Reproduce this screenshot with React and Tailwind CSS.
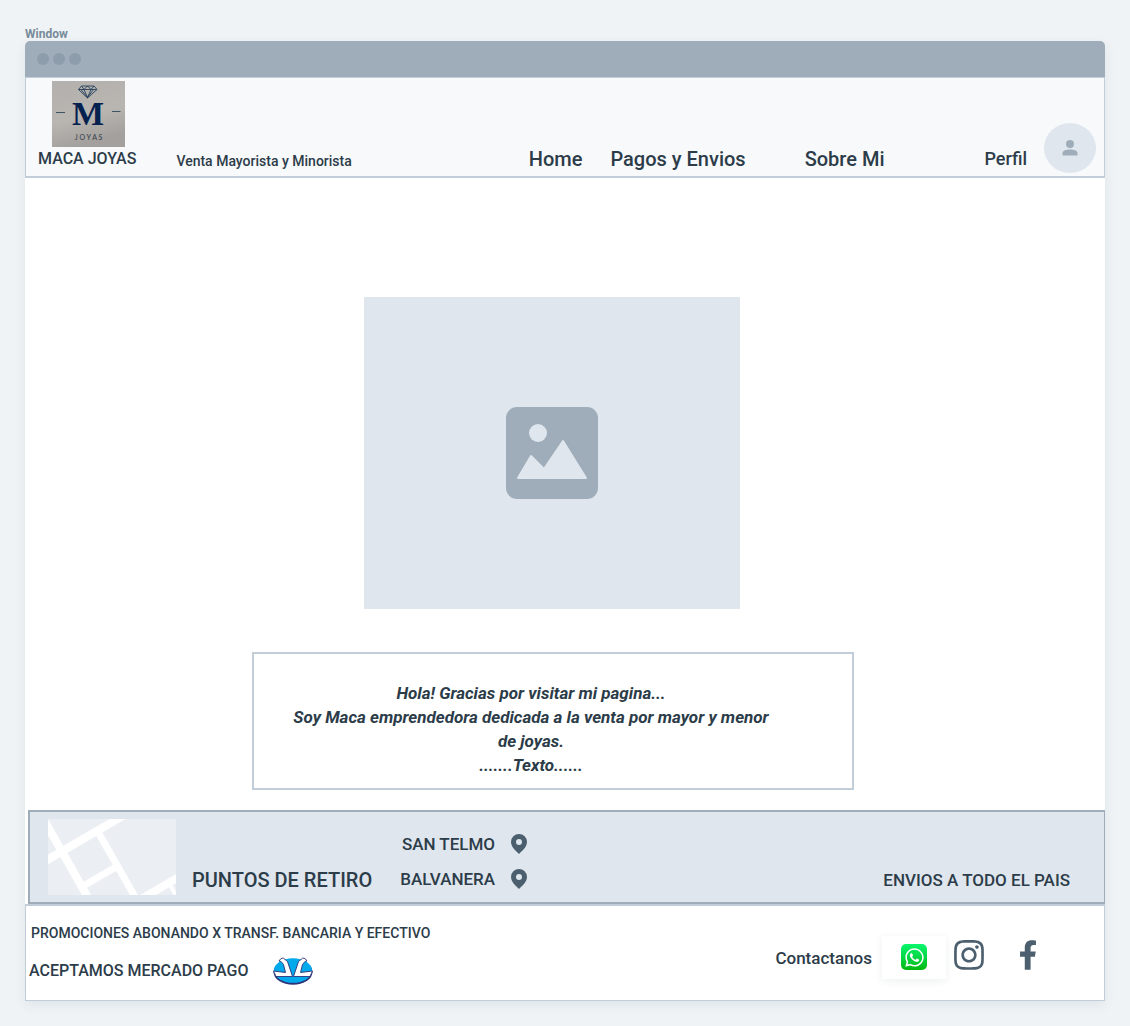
import React from "react";
import { FaInstagram, FaWhatsapp } from "react-icons/fa";

function BrandLogo() {
  return (
    <svg viewBox="0 0 73 66" className="h-[66px] w-[73px]" role="img" aria-label="Maca Joyas">
      <defs>
        <linearGradient id="paper" x1="0" y1="0" x2="0.3" y2="1">
          <stop offset="0" stopColor="#b3b0ad" />
          <stop offset="0.6" stopColor="#b9b5b1" />
          <stop offset="1" stopColor="#a3a09d" />
        </linearGradient>
      </defs>
      <rect width="73" height="66" fill="url(#paper)" />
      <g fill="none" stroke="#24405a" strokeWidth="0.9">
        <path d="M29.500 5h12.500l3 3.500-9.500 8.500-9-8.500z" />
        <path d="M26.500 8.500h18M29.500 5l2.500 3.500 3.500-3.500 3.500 3.500 3-3.500M32 8.500l3.500 8 3.500-8M29 8.500l6.500 8 6-8" />
      </g>
      <text x="36" y="44" textAnchor="middle" fill="#04214f" fontFamily="Liberation Serif, serif" fontWeight="700" fontSize="34">M</text>
      <path d="M4 31.500h9M60 30.500h8.500" stroke="#3d5468" strokeWidth="1" />
      <text x="36.500" y="59" textAnchor="middle" fill="#39434d" fontFamily="Lato, sans-serif" fontSize="7">J O Y A S</text>
    </svg>
  );
}

function Pin() {
  return (
    <svg viewBox="0 0 16 20" className="h-5 w-4" aria-hidden="true">
      <path fill="#4c5f6e" fillRule="evenodd" d="M8 0a8 8 0 0 0-8 8c0 5 5 9 8 12 3-3 8-7 8-12a8 8 0 0 0-8-8zm0 5a3 3 0 1 1 0 6 3 3 0 0 1 0-6z" />
    </svg>
  );
}

function MapThumb() {
  return (
    <svg viewBox="0 0 128 76" className="h-[76px] w-32" role="img" aria-label="Mapa">
      <rect width="128" height="76" fill="#ebeff4" />
      <g stroke="#fff" fill="none">
        <path d="M-6 44L78-5" strokeWidth="8" />
        <path d="M-4 1L42 82" strokeWidth="8" />
        <path d="M50 13L90 83" strokeWidth="7" />
        <path d="M37 66L68 48" strokeWidth="7" />
        <path d="M90 82L134 56" strokeWidth="8" />
        <path d="M122 66L130 80" strokeWidth="4" />
      </g>
    </svg>
  );
}

function MercadoPago() {
  return (
    <svg viewBox="0 0 40 28" className="h-7 w-10" role="img" aria-label="Mercado Pago">
      <ellipse cx="20" cy="15" rx="19.500" ry="12.800" fill="#2d3277" />
      <ellipse cx="20" cy="13.500" rx="19" ry="12.300" fill="#00a9ec" />
      <g fill="#fff" stroke="#2d3277" strokeWidth="0.9" strokeLinejoin="round">
        <path d="M6 4Q9-1 12 2.500L14.500 4.500L19.500 19.500L3 19.500L0.500 14L12.500 15.500L10.500 7.500L8 4.500z" />
        <path d="M34 4Q31-1 28 2.500L25.500 4.500L20.500 19.500L37 19.500L39.500 14L27.500 15.500L29.500 7.500L32 4.500z" />
      </g>
    </svg>
  );
}

export default function App() {
  return (
    <div className="min-h-screen bg-[#eff3f6] px-[25px] pt-[27px] pb-[25px] font-['Roboto',sans-serif] font-medium text-[#2c3c49]">
      <p className="text-[12px] leading-[14px] font-bold text-[#788b9a]">Window</p>
      <div className="flex flex-col rounded-t-[5px] bg-white shadow-[0_4px_12px_rgba(44,60,73,0.08)]">
        <div className="flex h-9 items-center gap-1 rounded-t-[5px] bg-[#9eadb9] px-3">
          <span className="size-3 rounded-full bg-[#8d9dab]" />
          <span className="size-3 rounded-full bg-[#8d9dab]" />
          <span className="size-3 rounded-full bg-[#8d9dab]" />
        </div>

        <header className="flex items-end border border-b-2 border-[#c1ceda] bg-[#f8f9fb] pt-[3px] pr-2 pl-3">
          <div className="flex flex-col pb-[5px]">
            <div className="pl-[14px]"><BrandLogo /></div>
            <span className="text-[16px] leading-6">MACA JOYAS</span>
          </div>
          <p className="ml-10 pb-[5px] text-[14px] leading-5">Venta Mayorista y Minorista</p>
          <nav className="ml-auto flex items-end pb-[5px] text-[20px] leading-6">
            <a href="#home">Home</a>
            <a href="#pagos" className="ml-7">Pagos y Envios</a>
            <a href="#sobre" className="ml-[59px]">Sobre Mi</a>
          </nav>
          <a href="#perfil" className="ml-[100px] pb-[5px] text-[18px] leading-6">Perfil</a>
          <button type="button" aria-label="Perfil" className="mb-[3px] ml-[17px] flex h-[50px] w-[52px] items-center justify-center rounded-[50%] bg-[#dfe6ee]">
            <svg viewBox="0 0 16 16" className="size-4" fill="#9eadb9" aria-hidden="true">
              <circle cx="8" cy="4" r="4" />
              <path d="M0.500 15.500v-2.500c0-2.500 4-3.500 7.500-3.500s7.500 1 7.500 3.500v2.500z" />
            </svg>
          </button>
        </header>

        <main className="flex flex-col items-center pt-[119px] pb-5">
          <div className="mr-[26px] flex h-[312px] w-[376px] items-center justify-center bg-[#dfe6ee]">
            <svg viewBox="0 0 92 92" className="size-[92px]" role="img" aria-label="Imagen">
              <rect width="92" height="92" rx="11" fill="#9eadb9" />
              <circle cx="32" cy="26" r="9" fill="#dfe6ee" />
              <path d="M12 71L25 49l13 13L57 34l23 37z" fill="#dfe6ee" stroke="#dfe6ee" strokeWidth="2" strokeLinejoin="round" />
            </svg>
          </div>
          <section className="mt-[43px] mr-6 w-[602px] border-2 border-[#c1ceda] pt-[27px] pr-[76px] pb-[11px] pl-8 text-center text-[17px] leading-6 font-bold italic">
            <p>Hola! Gracias por visitar mi pagina...</p>
            <p>Soy Maca emprendedora dedicada a la venta por mayor y menor de joyas.</p>
            <p>.......Texto......</p>
          </section>
        </main>

        <section className="ml-[3px] flex items-end border-2 border-r border-[#9eadb9] bg-[#dfe6ee] pt-[7px] pr-[34px] pb-[7px] pl-[18px]">
          <MapThumb />
          <h2 className="ml-4 text-[20px] leading-[30px]">PUNTOS DE RETIRO</h2>
          <ul className="ml-7 flex flex-col gap-[11px] pb-1 text-[17px] leading-6">
            <li className="flex items-center justify-end gap-4">SAN TELMO <Pin /></li>
            <li className="flex items-center justify-end gap-4">BALVANERA <Pin /></li>
          </ul>
          <p className="ml-auto pb-[3px] text-[17px] leading-6">ENVIOS A TODO EL PAIS</p>
        </section>

        <footer className="flex items-center justify-between border border-t-2 border-[#c1ceda] pt-[15px] pr-[68px] pb-[15px] pl-[3px]">
          <div>
            <p className="pl-[2px] text-[14px] leading-6">PROMOCIONES ABONANDO X TRANSF. BANCARIA Y EFECTIVO</p>
            <div className="mt-3 flex items-center gap-6">
              <p className="text-[16px] leading-7">ACEPTAMOS MERCADO PAGO</p>
              <MercadoPago />
            </div>
          </div>
          <div className="flex items-center pt-2">
            <span className="pt-[2px] text-[17px] leading-6">Contactanos</span>
            <a href="#whatsapp" aria-label="WhatsApp" className="ml-[10px] flex h-[43px] w-16 items-center justify-center bg-white shadow-[0_2px_8px_rgba(44,60,73,0.08)]">
              <span className="flex size-[26px] items-center justify-center rounded-[5px] bg-linear-to-b from-[#08f76c] to-[#05b805]">
                <FaWhatsapp className="size-[21px] text-white" />
              </span>
            </a>
            <a href="#instagram" aria-label="Instagram" className="mb-1 ml-2 text-[#4c5f6e]"><FaInstagram className="h-[34px] w-[30px]" /></a>
            <a href="#facebook" aria-label="Facebook" className="mb-1 ml-9">
              <svg viewBox="22 0 276 512" className="h-[30px] w-4" fill="#4c5f6e" aria-hidden="true">
                <path d="M279.140 288l14.220-92.660h-88.910v-60.130c0-25.350 12.420-50.060 52.240-50.060h40.420V6.260S260.430 0 225.360 0c-73.220 0-121.080 44.380-121.080 124.720v70.620H22.890V288h81.390v224h100.170V288z" />
              </svg>
            </a>
          </div>
        </footer>
      </div>
    </div>
  );
}
